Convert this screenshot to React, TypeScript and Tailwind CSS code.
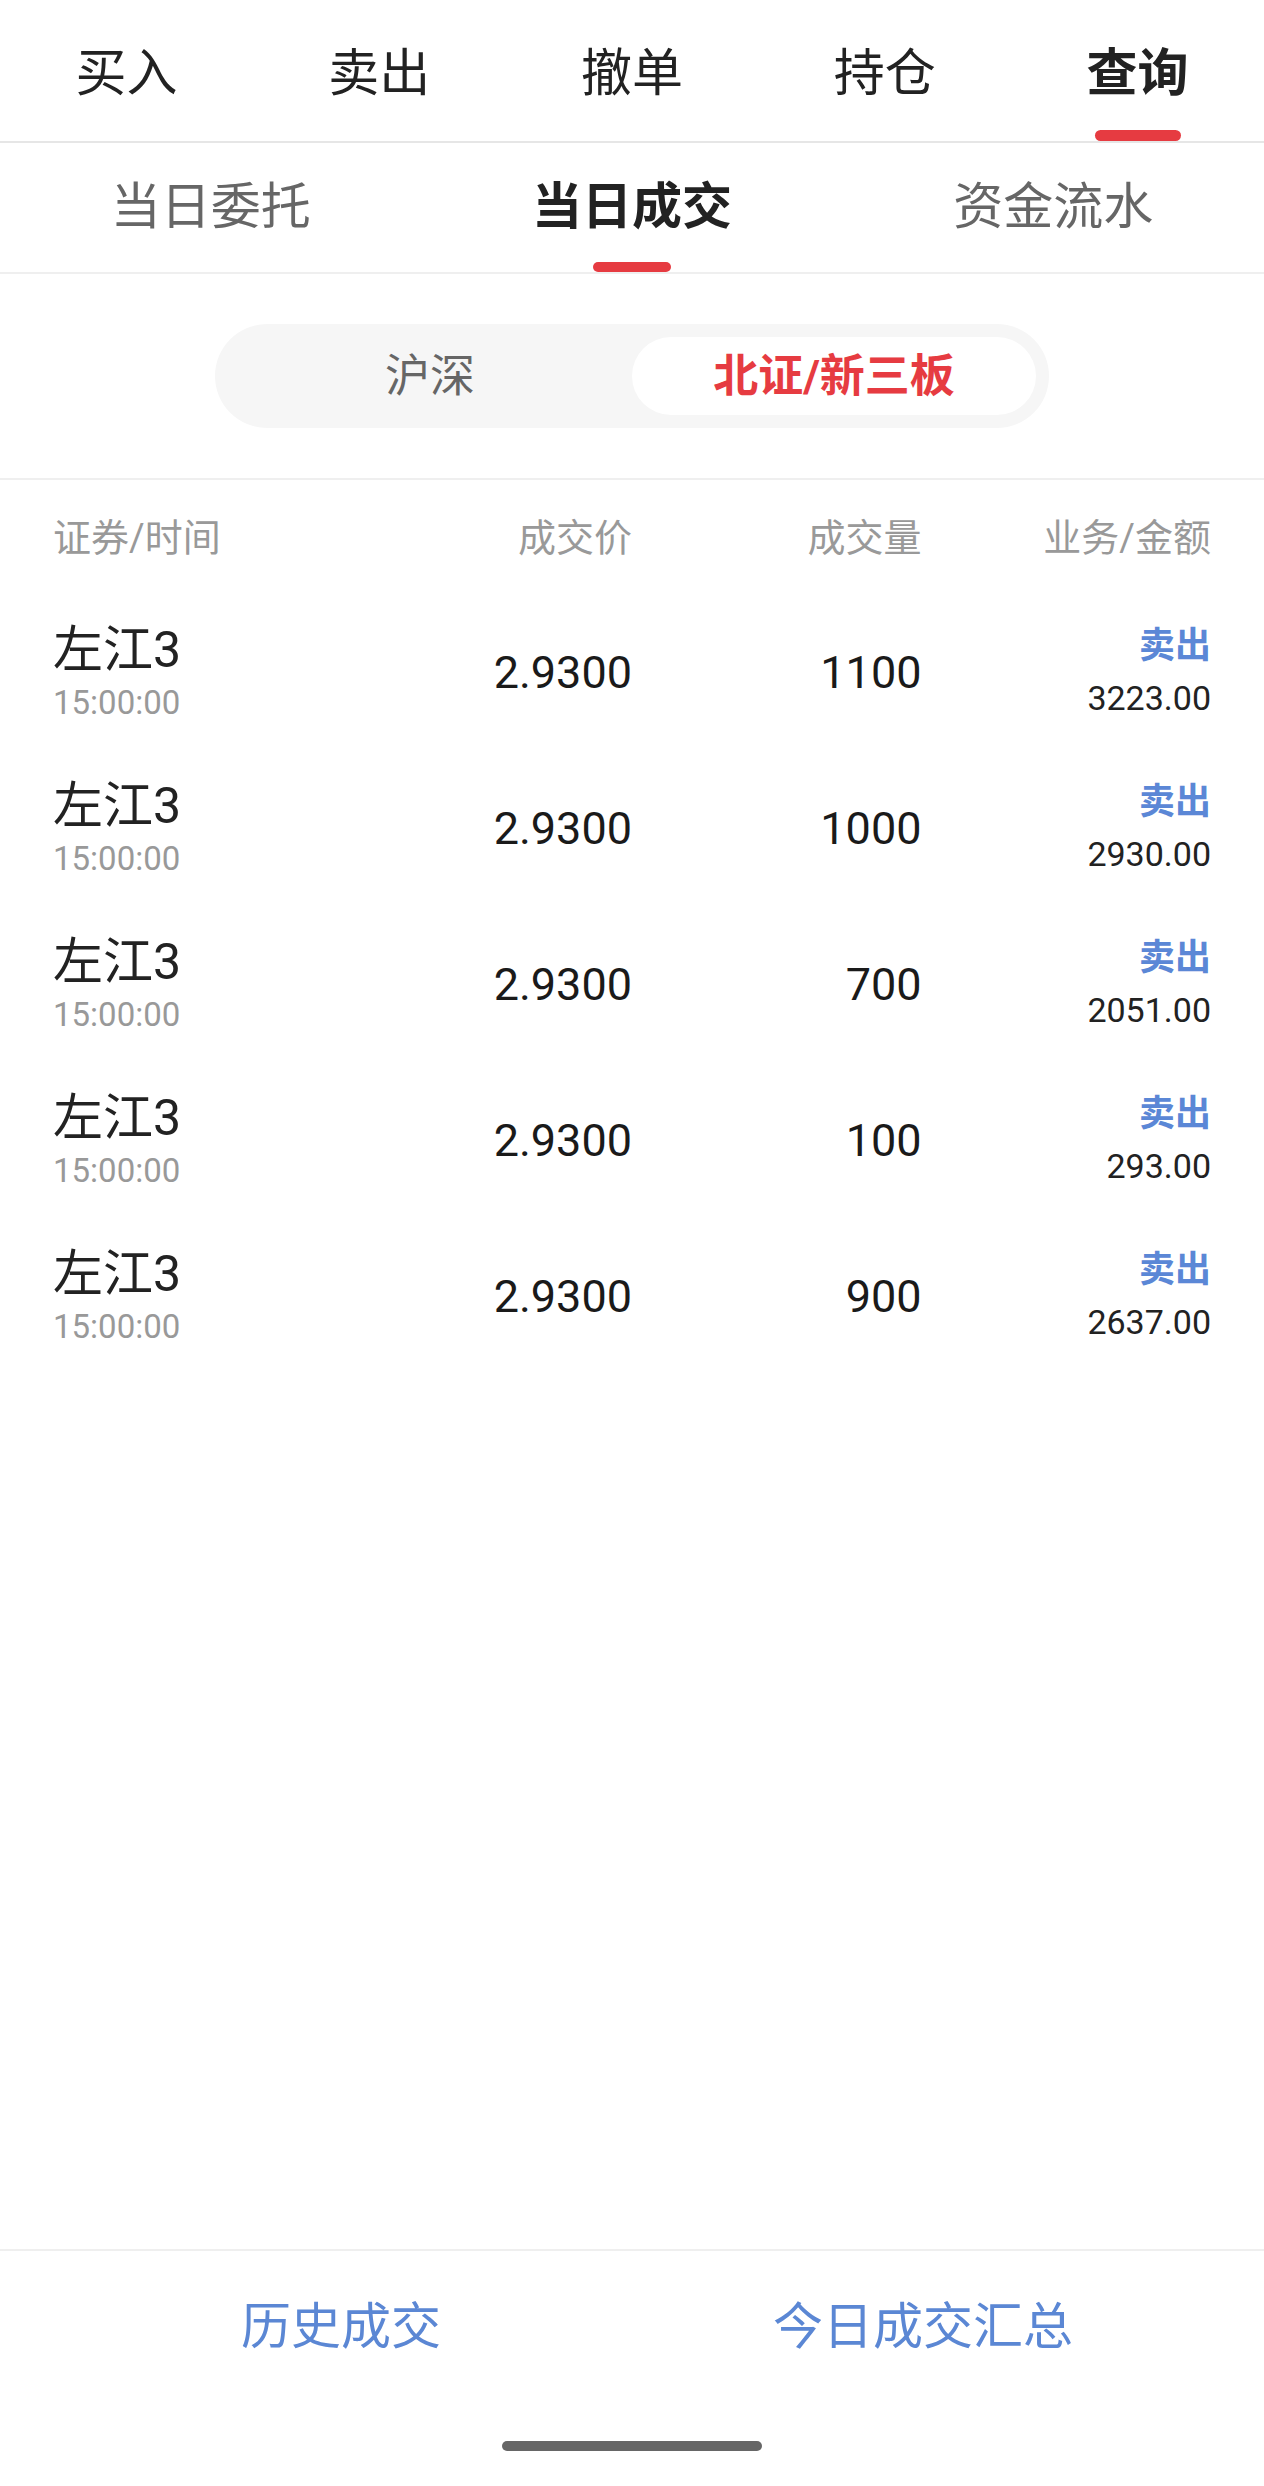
import React from "react";

const topTabs = ["买入", "卖出", "撤单", "持仓", "查询"];
const subTabs = ["当日委托", "当日成交", "资金流水"];
const rows = [
  { qty: "1100", amt: "3223.00" },
  { qty: "1000", amt: "2930.00" },
  { qty: "700", amt: "2051.00" },
  { qty: "100", amt: "293.00" },
  { qty: "900", amt: "2637.00" },
];

export default function App() {
  return (
    <div
      className="flex h-[2486px] w-[1264px] flex-col bg-white text-[#222]"
      style={{ fontFamily: 'Roboto, "Noto Sans CJK SC", sans-serif' }}
    >
      {/* top tabs */}
      <div className="grid h-[143px] grid-cols-5 border-b-2 border-[#e6e6e6]">
        {topTabs.map((t, i) => (
          <div key={t} className="relative flex items-center justify-center pt-[6px]">
            <span className={`text-[51px] leading-none ${i === 4 ? "font-bold" : ""}`}>{t}</span>
            {i === 4 && (
              <div className="absolute bottom-0 left-1/2 h-[11px] w-[86px] -translate-x-1/2 rounded-full bg-[#e63b41]" />
            )}
          </div>
        ))}
      </div>

      {/* sub tabs */}
      <div className="grid h-[131px] grid-cols-3 border-b-2 border-[#efefef]">
        {subTabs.map((t, i) => (
          <div key={t} className="relative flex items-center justify-center pb-[2px]">
            <span
              className={`text-[50px] leading-none ${i === 1 ? "font-bold text-[#222]" : "text-[#666]"}`}
            >
              {t}
            </span>
            {i === 1 && (
              <div className="absolute bottom-0 left-1/2 h-[10px] w-[78px] -translate-x-1/2 rounded-full bg-[#e63b41]" />
            )}
          </div>
        ))}
      </div>

      {/* segment */}
      <div className="flex h-[206px] items-center justify-center border-b-2 border-[#efefef]">
        <div className="grid h-[104px] w-[834px] grid-cols-2 rounded-full bg-[#f6f6f6] p-[13px]">
          <div className="flex items-center justify-center text-[45px] leading-none text-[#666]">沪深</div>
          <div className="flex items-center justify-center rounded-full bg-white text-[45px] font-bold leading-none text-[#e63b41]">
            北证/新三板
          </div>
        </div>
      </div>

      {/* table header */}
      <div className="grid h-[113px] grid-cols-4 items-center px-[53px] pt-[2px] text-[38px] leading-none text-[#999]">
        <div>证券/时间</div>
        <div className="text-right">成交价</div>
        <div className="text-right">成交量</div>
        <div className="text-right">业务/金额</div>
      </div>

      {/* rows */}
      {rows.map((r, i) => (
        <div key={i} className="grid h-[156px] grid-cols-4 items-center px-[53px]">
          <div className="flex flex-col">
            <span className="text-[50px] leading-[60px] text-[#222]">左江3</span>
            <span className="mt-[3px] text-[33px] leading-[40px] text-[#999]">15:00:00</span>
          </div>
          <div className="pt-[2px] text-right text-[45px] leading-none text-[#1a1a1a]">2.9300</div>
          <div className="pt-[2px] text-right text-[45px] leading-none text-[#1a1a1a]">{r.qty}</div>
          <div className="flex flex-col items-end">
            <span className="text-[36px] font-bold leading-[50px] text-[#5b87d6]">卖出</span>
            <span className="mt-[4px] text-[34px] leading-[46px] text-[#222]">{r.amt}</span>
          </div>
        </div>
      ))}

      <div className="flex-1" />

      {/* bottom bar */}
      <div className="flex h-[237px] flex-col border-t-2 border-[#efefef]">
        <div className="grid h-[152px] grid-cols-2 items-center px-[50px] text-[50px] leading-none text-[#5b87d4]">
          <div className="text-center">历史成交</div>
          <div className="text-center">今日成交汇总</div>
        </div>
        <div className="flex justify-center pt-[38px]">
          <div className="h-[10px] w-[260px] rounded-full bg-[#666]" />
        </div>
      </div>
    </div>
  );
}
